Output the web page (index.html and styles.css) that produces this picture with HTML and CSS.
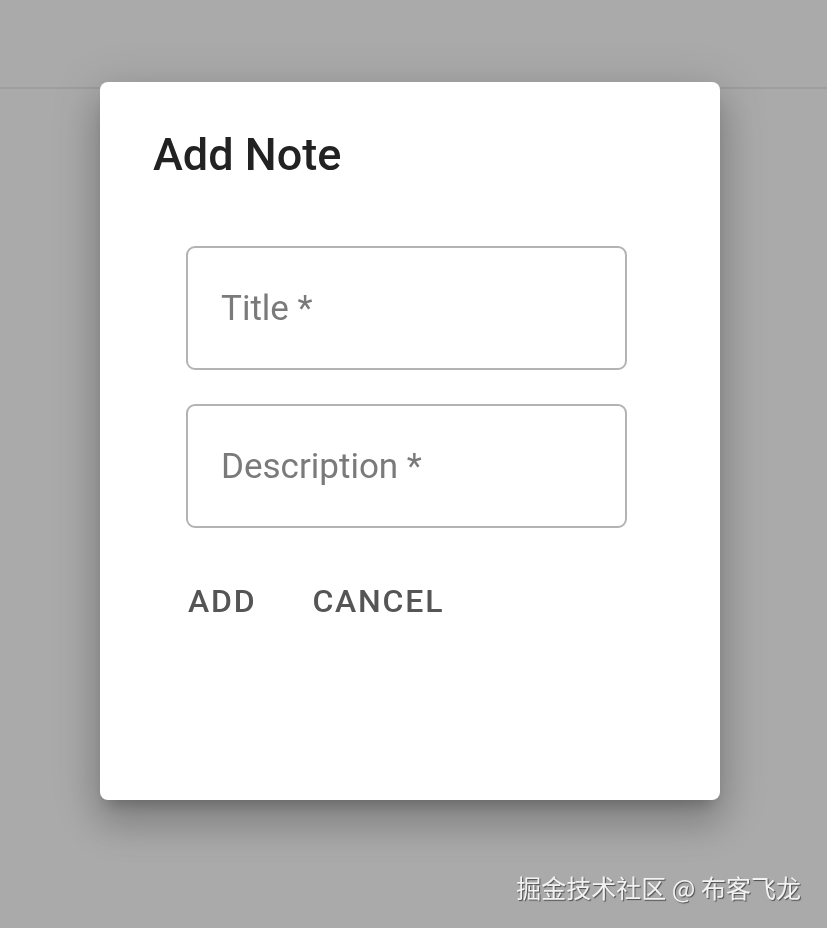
FILE: index.html
```html
<!DOCTYPE html>
<html lang="en">
<head>
  <meta charset="UTF-8">
  <meta name="viewport" content="width=device-width, initial-scale=1.0">
  <title>Add Note</title>
  <link rel="stylesheet" href="styles.css">
</head>
<body>
  <div class="app-bar"></div>

  <div class="backdrop">
    <div class="dialog" role="dialog" aria-labelledby="dialog-title">
      <h2 class="dialog-title" id="dialog-title">Add Note</h2>
      <form class="note-form">
        <input class="field" type="text" placeholder="Title *">
        <input class="field" type="text" placeholder="Description *">
        <div class="actions">
          <button type="submit" class="btn">Add</button>
          <button type="button" class="btn">Cancel</button>
        </div>
      </form>
    </div>
  </div>

  <div class="watermark">掘金技术社区 @ 布客飞龙</div>
</body>
</html>
```

FILE: styles.css
```css
* {
  box-sizing: border-box;
  margin: 0;
  padding: 0;
}

body {
  font-family: Roboto, "Liberation Sans", "Noto Sans CJK SC", sans-serif;
  background-color: #aaaaaa;
  height: 928px;
  overflow: hidden;
}

.app-bar {
  height: 89px;
  border-bottom: 2px solid #9e9e9e;
}

.backdrop {
  position: fixed;
  inset: 0;
  padding: 82px 0 0 100px;
}

.dialog {
  width: 620px;
  height: 718px;
  background-color: white;
  border-radius: 8px;
  padding: 46px 0 0 53px;
  box-shadow: 0 24px 38px 3px rgba(0, 0, 0, 0.16),
              0 9px 46px 8px rgba(0, 0, 0, 0.12),
              0 11px 15px -7px rgba(0, 0, 0, 0.22);
}

.dialog-title {
  font-size: 45px;
  font-weight: 500;
  line-height: 1.2;
  color: #222;
}

.note-form {
  width: 441px;
  margin: 64px 0 0 33px;
  display: flex;
  flex-direction: column;
}

.field {
  height: 124px;
  width: 100%;
  border: 2px solid #b3b3b3;
  border-radius: 9px;
  padding: 0 33px;
  font-family: inherit;
  font-size: 35px;
  color: #333;
  outline: none;
  margin-bottom: 34px;
}

.field::placeholder {
  color: #7a7a7a;
}

.actions {
  display: flex;
  gap: 56px;
  padding-left: 2px;
  margin-top: 20px;
}

.btn {
  background: none;
  border: none;
  font-family: inherit;
  font-size: 32px;
  font-weight: 500;
  letter-spacing: 1.8px;
  text-transform: uppercase;
  color: #555;
  line-height: 1.2;
  cursor: pointer;
}

.watermark {
  position: fixed;
  right: 26px;
  bottom: 26px;
  font-family: "Noto Sans CJK SC", sans-serif;
  font-size: 25px;
  line-height: 1.2;
  color: #f2f2f2;
  text-shadow: 1px 1px 1px rgba(0, 0, 0, 0.55);
}
```
